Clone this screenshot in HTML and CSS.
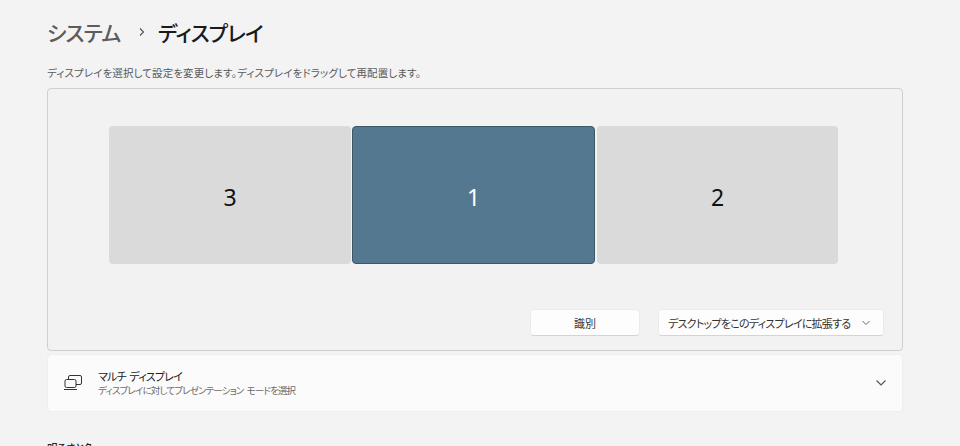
FILE: index.html
```html
<!DOCTYPE html>
<html lang="ja">

<head>
    <meta charset="UTF-8">
    <meta name="viewport" content="width=device-width, initial-scale=1.0">
    <title>ディスプレイ</title>
    <link rel="stylesheet" href="styles.css">
</head>

<body>
    <div class="container">
        <h1 class="breadcrumb">
            <span class="crumb-parent">システム</span>
            <svg class="crumb-sep" width="8" height="10" viewBox="0 0 8 10"><path d="M2 1.5 L5.5 5 L2 8.5" fill="none" stroke="#555" stroke-width="1.2"/></svg>
            <span class="crumb-current">ディスプレイ</span>
        </h1>
        <p class="hint">ディスプレイを選択して設定を変更します。ディスプレイをドラッグして再配置します。</p>

        <div class="panel">
            <div class="monitors">
                <div class="monitor">3</div>
                <div class="monitor monitor-active">1</div>
                <div class="monitor monitor-last">2</div>
            </div>
            <div class="panel-actions">
                <button class="btn btn-identify">識別</button>
                <button class="btn btn-extend">
                    <span>デスクトップをこのディスプレイに拡張する</span>
                    <svg width="10" height="6" viewBox="0 0 10 6"><path d="M1.5 1 L5 4.5 L8.5 1" fill="none" stroke="#666" stroke-width="1"/></svg>
                </button>
            </div>
        </div>

        <div class="card">
            <svg class="card-icon" width="19" height="16" viewBox="0 0 19 16">
                <path d="M4.5 4.5 V2 Q4.5 .5 6 .5 H16 Q17.5 .5 17.5 2 V8 Q17.5 9.5 16 9.5 H12" fill="none" stroke="#333" stroke-width="1"/>
                <rect x="1" y="4.5" width="11" height="8" rx="1.5" fill="none" stroke="#333" stroke-width="1"/>
                <path d="M0 14.5 H13" stroke="#333" stroke-width="1"/>
            </svg>
            <div class="card-text">
                <div class="card-title">マルチ ディスプレイ</div>
                <div class="card-sub">ディスプレイに対してプレゼンテーション モードを選択</div>
            </div>
            <svg class="card-chevron" width="12" height="8" viewBox="0 0 12 8"><path d="M1.5 1.5 L6 6 L10.5 1.5" fill="none" stroke="#555" stroke-width="1.2"/></svg>
        </div>

        <h2 class="section-title">明るさと色</h2>
    </div>
</body>

</html>
```

FILE: styles.css
```css
/* General body styling */
html,
body {
    height: 446px;
    overflow: hidden;
}

body {
    font-family: 'Noto Sans CJK JP', 'Noto Sans', sans-serif;
    font-feature-settings: "palt";
    background-color: #f3f3f3;
    color: #1b1b1b;
    margin: 0;
}

.container {
    padding: 17px 57px 0 47px;
}

.breadcrumb {
    display: flex;
    align-items: center;
    height: 30px;
    margin: 0;
    font-size: 21px;
    line-height: 30px;
    font-weight: 500;
}

.crumb-parent {
    color: #5c5c5c;
    width: 91px;
    letter-spacing: -0.8px;
}

.crumb-sep {
    margin-right: 12px;
}

.crumb-current {
    color: #1a1a1a;
    letter-spacing: -0.8px;
}

.hint {
    margin: 18px 0 0;
    font-size: 10.5px;
    line-height: 16px;
    letter-spacing: 0.12px;
    color: #5a5a5a;
    height: 13px;
}

/* Display arrangement panel */
.panel {
    box-sizing: border-box;
    height: 263px;
    margin-top: 10px;
    background-color: #f2f2f2;
    border: 1px solid #cfcfcf;
    border-radius: 4px;
    padding: 37px 18px 0 61px;
}

.monitors {
    display: flex;
    gap: 1px;
    height: 138px;
}

.monitor {
    width: 242px;
    box-sizing: border-box;
    padding-top: 3px;
    display: flex;
    justify-content: center;
    align-items: center;
    background-color: #dadada;
    border-radius: 4px;
    font-family: 'Noto Sans', sans-serif;
    font-size: 23px;
    color: #111;
}

.monitor-active {
    width: 243px;
    margin-right: 1px;
    background-color: #547890;
    border: 1px solid #3d5668;
    color: #fff;
}

.monitor-last {
    width: 241px;
}

.panel-actions {
    display: flex;
    justify-content: flex-end;
    gap: 18px;
    margin-top: 45px;
}

.btn {
    display: flex;
    align-items: center;
    justify-content: center;
    height: 27px;
    padding: 0;
    background-color: #fdfdfd;
    border: 1px solid #ebebeb;
    border-bottom-color: #d4d4d4;
    border-radius: 4px;
    font-family: inherit;
    font-feature-settings: inherit;
    font-size: 11px;
    color: #333;
    white-space: nowrap;
}

.btn-identify {
    width: 110px;
}

.btn-extend {
    width: 226px;
    justify-content: space-between;
    padding: 0 12px 0 9px;
    letter-spacing: -0.75px;
}

/* Settings row */
.card {
    display: flex;
    align-items: center;
    box-sizing: border-box;
    height: 58px;
    margin-top: 3px;
    padding: 0 15px 0 16px;
    background-color: #fbfbfb;
    border: 1px solid #eeeeee;
    border-radius: 4px;
}

.card-icon {
    flex: none;
}

.card-text {
    flex: 1;
    margin-left: 15px;
}

.card-title {
    font-size: 11px;
    line-height: 15px;
    letter-spacing: -0.8px;
    word-spacing: 2px;
    color: #222;
}

.card-sub {
    font-size: 9.5px;
    line-height: 13px;
    letter-spacing: -0.85px;
    word-spacing: 2px;
    color: #6a6a6a;
}

.card-chevron {
    flex: none;
}

.section-title {
    margin: 28px 0 0;
    font-size: 10.5px;
    line-height: 15px;
    font-weight: 500;
    letter-spacing: -0.4px;
    color: #222;
}
```
